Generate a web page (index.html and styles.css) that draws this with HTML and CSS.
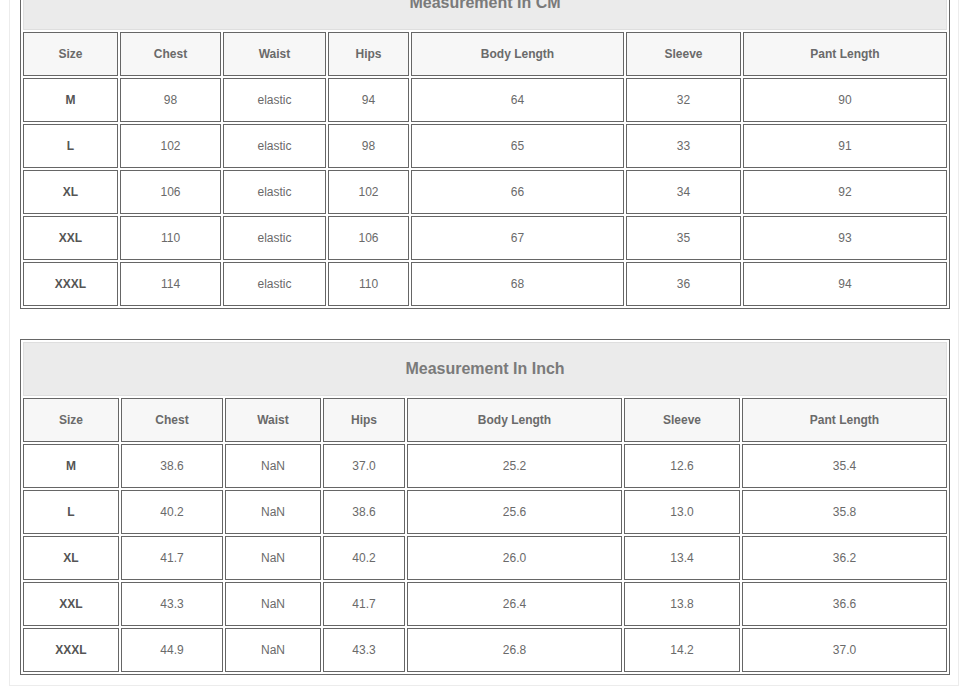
FILE: index.html
```html
<!DOCTYPE html>
<html>
<head>
<meta charset="utf-8">
<title>Size Chart</title>
<link rel="stylesheet" href="styles.css">
</head>
<body>
<div class="sheet">
  <table class="size-table cm">
    <tr><td class="caption" colspan="7">Measurement In CM</td></tr>
    <tr class="head">
      <th>Size</th><th>Chest</th><th>Waist</th><th>Hips</th><th>Body Length</th><th>Sleeve</th><th>Pant Length</th>
    </tr>
    <tr><td class="size">M</td><td>98</td><td>elastic</td><td>94</td><td>64</td><td>32</td><td>90</td></tr>
    <tr><td class="size">L</td><td>102</td><td>elastic</td><td>98</td><td>65</td><td>33</td><td>91</td></tr>
    <tr><td class="size">XL</td><td>106</td><td>elastic</td><td>102</td><td>66</td><td>34</td><td>92</td></tr>
    <tr><td class="size">XXL</td><td>110</td><td>elastic</td><td>106</td><td>67</td><td>35</td><td>93</td></tr>
    <tr><td class="size">XXXL</td><td>114</td><td>elastic</td><td>110</td><td>68</td><td>36</td><td>94</td></tr>
  </table>

  <table class="size-table inch">
    <tr><td class="caption" colspan="7">Measurement In Inch</td></tr>
    <tr class="head">
      <th>Size</th><th>Chest</th><th>Waist</th><th>Hips</th><th>Body Length</th><th>Sleeve</th><th>Pant Length</th>
    </tr>
    <tr><td class="size">M</td><td>38.6</td><td>NaN</td><td>37.0</td><td>25.2</td><td>12.6</td><td>35.4</td></tr>
    <tr><td class="size">L</td><td>40.2</td><td>NaN</td><td>38.6</td><td>25.6</td><td>13.0</td><td>35.8</td></tr>
    <tr><td class="size">XL</td><td>41.7</td><td>NaN</td><td>40.2</td><td>26.0</td><td>13.4</td><td>36.2</td></tr>
    <tr><td class="size">XXL</td><td>43.3</td><td>NaN</td><td>41.7</td><td>26.4</td><td>13.8</td><td>36.6</td></tr>
    <tr><td class="size">XXXL</td><td>44.9</td><td>NaN</td><td>43.3</td><td>26.8</td><td>14.2</td><td>37.0</td></tr>
  </table>
</div>
</body>
</html>
```

FILE: styles.css
```css
html, body {
  margin: 0;
  padding: 0;
  background: #ffffff;
}

body {
  font-family: "Liberation Sans", Arial, sans-serif;
  color: #666666;
}

.sheet {
  margin: -38px 0 0 9px;
  width: 938px;
  border: 1px solid #ececec;
  padding: 10px 0 10px 10px;
  box-sizing: content-box;
  background: #ffffff;
  display: flex;
  flex-direction: column;
  gap: 30px;
}

.size-table {
  width: 930px;
  border: 1px solid #666666;
  border-collapse: separate;
  border-spacing: 2px;
}

.size-table th,
.size-table td {
  border: 1px solid #666666;
  padding: 0;
  height: 42px;
  text-align: center;
  vertical-align: middle;
  font-size: 12px;
  line-height: 14px;
  color: #6a6a6a;
  font-weight: normal;
  background: #ffffff;
}

.size-table th {
  font-weight: bold;
  background: #f7f7f7;
  color: #6a6a6a;
}

.size-table td.size {
  font-weight: bold;
  color: #555555;
}

.size-table td.caption {
  height: 52px;
  border: 1px solid #dedede;
  background: #ebebeb;
  font-size: 16px;
  line-height: 18px;
  font-weight: bold;
  color: #7a7a7a;
}

.cm th:nth-child(1) { width: 93px; }
.cm th:nth-child(2) { width: 99px; }
.cm th:nth-child(3) { width: 101px; }
.cm th:nth-child(4) { width: 79px; }
.cm th:nth-child(5) { width: 211px; }
.cm th:nth-child(6) { width: 113px; }
.cm th:nth-child(7) { width: 202px; }

.inch th:nth-child(1) { width: 94px; }
.inch th:nth-child(2) { width: 100px; }
.inch th:nth-child(3) { width: 94px; }
.inch th:nth-child(4) { width: 80px; }
.inch th:nth-child(5) { width: 213px; }
.inch th:nth-child(6) { width: 114px; }
.inch th:nth-child(7) { width: 203px; }
```
